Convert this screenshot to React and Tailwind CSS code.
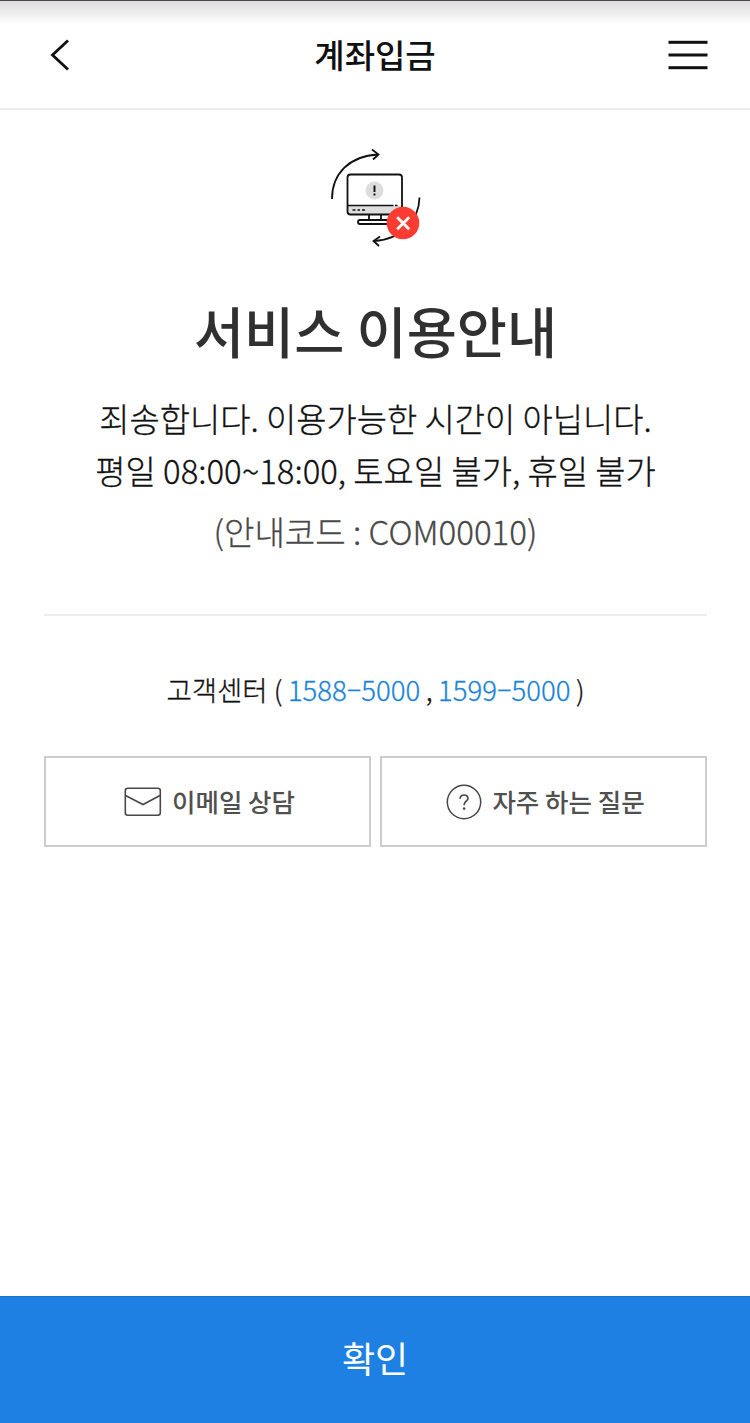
import React from "react";

const CONTACTS = [
  ["1588", "5000"],
  ["1599", "5000"],
];

/* -------------------- ICONS -------------------- */

const BackIcon = () => (
  <svg width="24" height="36" viewBox="0 0 24 36" fill="none">
    <path d="M20 3.500 4.500 18 20 32.500" stroke="#111" strokeWidth="2.800" />
  </svg>
);

const MenuIcon = () => (
  <svg width="40" height="30" viewBox="0 0 40 30" fill="#111">
    <rect x="0.500" y="0.800" width="39" height="3" />
    <rect x="0.500" y="13.500" width="39" height="3" />
    <rect x="0.500" y="26.200" width="39" height="3" />
  </svg>
);

const ServiceIcon = () => (
  <svg width="110" height="115" viewBox="0 0 110 115" fill="none">
    <g stroke="#111" strokeWidth="1.800">
      {/* rotating arrows */}
      <path d="M12 59C12 34 29 16 58 14.500" />
      <path d="M52 9.500 58.500 14.500 53 19.500" />
      <path d="M99.500 57.500C99 79 83 99 54 101" />
      <path d="M60 96.500 53.500 101 59 106" />
      {/* monitor */}
      <rect x="38" y="80" width="48" height="4" rx="2" />
      <path d="M49 75v5M61 75v5" />
    </g>
    <rect x="27.500" y="34.500" width="54.500" height="40" rx="3" fill="#fff" />
    <path d="M28 65.500h54V72q0 2.500-2.500 2.500h-49Q28 74.500 28 72z" fill="#ddd" />
    <rect
      x="27.500"
      y="34.500"
      width="54.500"
      height="40"
      rx="3"
      stroke="#111"
      strokeWidth="1.800"
    />
    <path
      d="M28 65.500h45.500M75 65.500h2.500"
      stroke="#111"
      strokeWidth="1.500"
    />
    <path
      d="M32.500 70h3M37.500 70h2.500M42 70h3"
      stroke="#111"
      strokeWidth="1.500"
    />
    <circle cx="54.500" cy="50.500" r="9" fill="#ddd" />
    <path d="M54.500 45.500v6.500M54.500 53.500v2" stroke="#111" strokeWidth="1.900" />
    {/* error badge */}
    <circle cx="83" cy="83" r="16.300" fill="#fa3c32" />
    <path
      d="m77.200 77.200 12 12m0-12-12 12"
      stroke="#fff"
      strokeWidth="2.800"
    />
  </svg>
);

const MailIcon = () => (
  <svg width="38" height="30" viewBox="0 0 38 30" fill="none">
    <g stroke="#484848" strokeWidth="1.600">
      <rect x="1.300" y="1.300" width="35" height="27" rx="2.500" />
      <path d="m1.500 8.500 17.500 9 17-9" />
    </g>
  </svg>
);

const QuestionIcon = () => (
  <svg width="36" height="36" viewBox="0 0 36 36" fill="none">
    <circle cx="18" cy="18" r="16.700" stroke="#484848" strokeWidth="1.500" />
    <path
      d="M14 14.800q.3-3.800 4-3.800t4 3.300c0 2.700-3.800 3-3.800 6.200v.7"
      stroke="#484848"
      strokeWidth="1.700"
    />
    <circle cx="18.100" cy="24.600" r="1.300" fill="#484848" />
  </svg>
);

/* -------------------- PARTS -------------------- */

const Header = () => (
  <header className="h-[110px] shrink-0 border-t border-t-[#4a464a] border-b-2 border-b-[#ebebeb] bg-linear-to-b from-[#dedcde] to-white to-[24px] pr-[42px] pl-[48px] flex items-center justify-between">
    <button className="w-[40px]" aria-label="뒤로">
      <BackIcon />
    </button>
    <h1 className="mr-[6px] text-[33px] font-medium leading-none text-[#111]">
      계좌입금
    </h1>
    <button aria-label="메뉴">
      <MenuIcon />
    </button>
  </header>
);

const PhoneLink = ({ parts }) => (
  <span className="text-[#1a84d8]">
    {parts[0]}
    <span className="relative -top-[3px]">–</span>
    {parts[1]}
  </span>
);

const ActionButton = ({ icon, children }) => (
  <button className="h-[91px] flex-1 border-2 border-[#ccc] pl-[4px] flex items-center justify-center gap-[10px] text-[25.5px] font-medium leading-none text-[#505050]">
    {icon}
    <span className="pb-[2px]">{children}</span>
  </button>
);

const App = () => {
  return (
    <div className="flex h-screen w-full flex-col bg-white font-['Noto_Sans_CJK_KR',sans-serif] whitespace-nowrap">
      <Header />

      <main className="flex flex-1 flex-col pr-[43px] pl-[44px] text-center">
        <div className="mt-[30px] mr-px flex justify-center">
          <ServiceIcon />
        </div>

        <h2 className="mt-[35px] text-[54.5px] font-medium leading-[80px] text-[#303030]">
          서비스 이용안내
        </h2>

        <div className="mt-[22px] text-[32.9px] font-light leading-[52px] text-[#111] [-webkit-text-stroke:0.3px]">
          <p>죄송합니다. 이용가능한 시간이 아닙니다.</p>
          <p>평일 08:00~18:00, 토요일 불가, 휴일 불가</p>
        </div>
        <p className="mt-[9px] text-[33.1px] font-light leading-[52px] text-[#484848] [-webkit-text-stroke:0.3px]">
          (안내코드 : COM00010)
        </p>

        <hr className="mt-[57px] border-t-2 border-[#ededed]" />

        <p className="mt-[53px] flex justify-center gap-[5.5px] text-[27.5px] font-light leading-[40px] text-[#111] [-webkit-text-stroke:0.3px]">
          <span>고객센터 (</span>
          <PhoneLink parts={CONTACTS[0]} />
          <span>,</span>
          <PhoneLink parts={CONTACTS[1]} />
          <span>)</span>
        </p>

        <div className="mt-[47px] flex gap-[9px]">
          <ActionButton icon={<MailIcon />}>이메일 상담</ActionButton>
          <ActionButton icon={<QuestionIcon />}>자주 하는 질문</ActionButton>
        </div>
      </main>

      <button className="h-[127px] shrink-0 border-t border-[#1873c6] bg-[#1f80e3] pb-[6px] text-[36px] font-normal leading-none text-white">
        확인
      </button>
    </div>
  );
};

export default App;
